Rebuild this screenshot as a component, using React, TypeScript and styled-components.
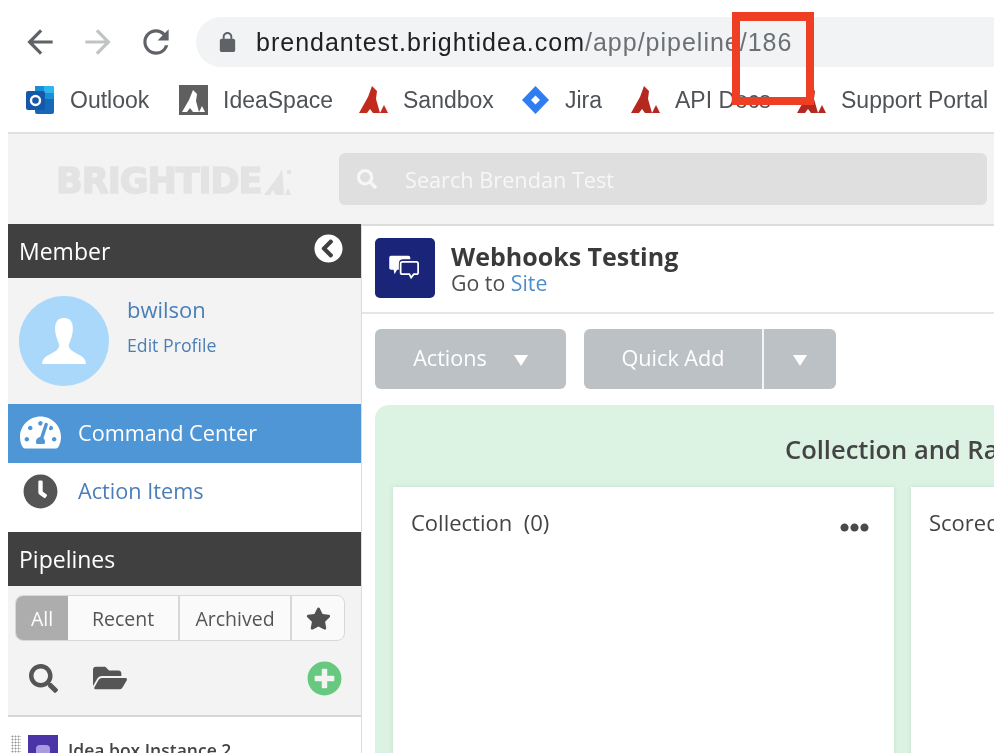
import React from "react";
import styled, { createGlobalStyle } from "styled-components";
import {
  FaChevronCircleLeft,
  FaClock,
  FaEllipsisH,
  FaFolderOpen,
  FaPlusCircle,
  FaSearch,
  FaStar,
  FaTachometerAlt,
} from "react-icons/fa";

const GlobalStyle = createGlobalStyle`
  html, body {
    margin: 0;
    padding: 0;
    background: #fff;
    overflow: hidden;
  }
  * {
    box-sizing: border-box;
  }
`;

const Page = styled.div`
  position: relative;
  width: 994px;
  height: 753px;
  overflow: hidden;
  background: #fff;
  filter: blur(0.5px);
`;

const Chrome = styled.div`
  height: 132px;
  font-family: "Liberation Sans", Arial, sans-serif;
`;

const Toolbar = styled.div`
  display: flex;
  align-items: center;
  height: 84px;
  padding: 17px 0 17px 21px;
`;

const NavButton = styled.svg<{ $dim?: boolean; $flip?: boolean }>`
  width: 38px;
  height: 38px;
  margin-right: 20px;
  fill: ${(p) => (p.$dim ? "#c1c3c5" : "#5f6368")};
  flex: none;
  transform: ${(p) => (p.$flip ? "scaleX(-1)" : "none")};
`;

const UrlPill = styled.div`
  display: flex;
  align-items: center;
  flex: 1;
  height: 50px;
  margin-left: 1px;
  padding-left: 20px;
  border-radius: 25px 0 0 25px;
  background: #f1f3f4;
  font-size: 25px;
  letter-spacing: 1px;
  white-space: nowrap;
`;

const LockIcon = styled.svg`
  width: 23px;
  height: 23px;
  margin-right: 17px;
  fill: #5f6368;
`;

const UrlHost = styled.span`
  color: #202124;
`;

const UrlPath = styled.span`
  color: #6c7074;
`;

const Bookmarks = styled.div`
  display: flex;
  align-items: center;
  height: 32px;
  padding-left: 26px;
  white-space: nowrap;
`;

const Bookmark = styled.div<{ $width: number }>`
  display: flex;
  align-items: center;
  gap: 15px;
  flex: none;
  width: ${(p) => p.$width}px;
  font-size: 23px;
  color: #4f5256;
`;

const BookmarkIcon = styled.svg`
  width: 29px;
  height: 30px;
  flex: none;
`;

const AppShell = styled.div`
  margin-left: 8px;
  font-family: "Open Sans", sans-serif;
`;

const TopBar = styled.div`
  display: flex;
  align-items: center;
  height: 92px;
  padding: 0 7px 0 48px;
  border-top: 2px solid #e0e0e0;
  background: #f3f3f3;
`;

const Logo = styled.div`
  display: flex;
  align-items: center;
  width: 283px;
  padding-top: 4px;
  font-family: "DejaVu Sans", sans-serif;
  font-weight: 700;
  font-size: 35px;
  letter-spacing: -1px;
  color: #e3e3e3;
  -webkit-text-stroke: 1.5px #e3e3e3;
`;

const LogoMark = styled.svg`
  width: 28px;
  height: 27px;
  fill: #e3e3e3;
  margin-left: 2px;
`;

const SearchBar = styled.div`
  display: flex;
  align-items: center;
  gap: 28px;
  flex: 1;
  height: 52px;
  padding-left: 18px;
  border-radius: 6px;
  background: #dfdfdf;
  color: #f7f7f7;
  font-size: 21.7px;
`;

const Columns = styled.div`
  display: flex;
  height: 532px;
`;

const Sidebar = styled.aside`
  flex: none;
  width: 354px;
  border-right: 1px solid #dcdcdc;
`;

const SectionHeader = styled.div`
  display: flex;
  align-items: center;
  justify-content: space-between;
  height: 54px;
  padding: 0 18px 0 11px;
  background: #404040;
  color: #fff;
  font-size: 23px;

  svg {
    margin-bottom: 6px;
  }
`;

const Profile = styled.div`
  display: flex;
  gap: 18px;
  height: 126px;
  padding: 18px 0 0 11px;
  background: #f3f3f3;
`;

const Avatar = styled.div`
  display: flex;
  align-items: flex-end;
  justify-content: center;
  width: 90px;
  height: 90px;
  padding-bottom: 21px;
  border-radius: 50%;
  background: #a9d8fb;
`;

const AvatarIcon = styled.svg`
  width: 44px;
  height: 48px;
  fill: #fff;
`;

const ProfileText = styled.div`
  display: flex;
  flex-direction: column;
  gap: 9px;
  margin-top: -2px;
`;

const UserName = styled.a`
  color: #4b7eb6;
  font-size: 22px;
  line-height: 30px;
`;

const EditLink = styled.a`
  color: #4b7eb6;
  font-size: 17.7px;
  line-height: 24px;
`;

const NavItem = styled.div<{ $active?: boolean; $height: number }>`
  display: flex;
  align-items: ${(p) => (p.$active ? "center" : "flex-start")};
  gap: 17px;
  height: ${(p) => p.$height}px;
  padding: ${(p) => (p.$active ? "0 0 2px 11px" : "9px 0 0 11px")};
  background: ${(p) => (p.$active ? "#4f96d6" : "#fff")};
  color: ${(p) => (p.$active ? "#fff" : "#4b7eb6")};
  font-size: 21.7px;
  line-height: 38px;
`;

const NavIconSlot = styled.span<{ $color: string }>`
  display: flex;
  justify-content: center;
  align-items: center;
  width: 42px;
  height: 38px;
  font-size: 41px;
  color: ${(p) => p.$color};
`;

const FilterArea = styled.div`
  height: 131px;
  padding: 9px 0 0 7px;
  background: #f3f3f3;
  border-bottom: 2px solid #d6d6d6;
`;

const Tabs = styled.div`
  display: flex;
  width: 330px;
  height: 46px;
  border: 1px solid #d8d8d8;
  border-radius: 8px;
  overflow: hidden;
  background: #fafafa;
`;

const Tab = styled.div<{ $active?: boolean; $width: number }>`
  display: flex;
  align-items: center;
  justify-content: center;
  flex: none;
  width: ${(p) => p.$width}px;
  border-right: ${(p) => (p.$active ? "none" : "2px solid #d8d8d8")};
  background: ${(p) => (p.$active ? "#adadad" : "transparent")};
  color: ${(p) => (p.$active ? "#fff" : "#555")};
  font-size: 19.5px;

  &:last-child {
    border-right: none;
    font-size: 25px;
    color: #505050;
  }
`;

const ToolRow = styled.div`
  display: flex;
  align-items: center;
  height: 40px;
  margin-top: 17px;
  padding: 0 3px 0 14px;
  width: 330px;
  color: #555;
  font-size: 29px;
`;

const FolderSlot = styled.span`
  display: flex;
  margin-left: 35px;
  font-size: 34px;
`;

const AddSlot = styled.span`
  display: flex;
  margin-left: auto;
  color: #66c97f;
  font-size: 35px;
`;

const PipelineRow = styled.div`
  display: flex;
  align-items: flex-start;
  gap: 7px;
  padding: 18px 0 0 3px;
  background: #fff;
`;

const DragGrip = styled.div`
  width: 10px;
  height: 18px;
  background-image: radial-gradient(#9a9a9a 0.9px, transparent 1.1px);
  background-size: 3px 3px;
`;

const PipelineThumb = styled.div`
  display: flex;
  align-items: center;
  justify-content: center;
  width: 30px;
  height: 31px;
  background: #4b33a8;
`;

const ThumbGlyph = styled.span`
  width: 14px;
  height: 12px;
  border-radius: 4px;
  background: #a99be0;
`;

const PipelineName = styled.div`
  margin-left: 3px;
  font-size: 17.5px;
  font-weight: 600;
  line-height: 30px;
  color: #444;
`;

const Main = styled.main`
  flex: 1;
  min-width: 0;
  overflow: hidden;
  border-top: 2px solid #dcdcdc;
`;

const TitleRow = styled.div`
  display: flex;
  align-items: center;
  gap: 16px;
  height: 88px;
  padding: 0 0 3px 13px;
  border-bottom: 2px solid #e6e6e6;
`;

const SiteIcon = styled.div`
  display: flex;
  align-items: center;
  justify-content: center;
  width: 60px;
  height: 60px;
  border-radius: 5px;
  background: #1a2478;
`;

const SiteText = styled.div`
  margin-top: 3px;
`;

const SiteTitle = styled.div`
  color: #3a3a3a;
  font-size: 25px;
  font-weight: 700;
  line-height: 28px;
`;

const SiteSub = styled.div`
  color: #4d4d4d;
  font-size: 21.3px;
  line-height: 26px;
`;

const SiteLink = styled.a`
  color: #4f8ec9;
`;

const ActionBar = styled.div`
  display: flex;
  gap: 18px;
  padding: 15px 0 16px 13px;
`;

const GreyButton = styled.div`
  display: flex;
  align-items: stretch;
  height: 60px;
  border-radius: 6px;
  background: #bcc1c5;
  color: #fff;
  font-size: 21.6px;
`;

const ButtonPart = styled.div<{ $width: number; $divided?: boolean }>`
  display: flex;
  align-items: center;
  justify-content: center;
  gap: 27px;
  width: ${(p) => p.$width}px;
  padding-bottom: 3px;
  border-left: ${(p) => (p.$divided ? "2px solid #f4f5f6" : "none")};
`;

const Caret = styled.span`
  width: 0;
  height: 0;
  margin-top: 5px;
  border-left: 7px solid transparent;
  border-right: 7px solid transparent;
  border-top: 11px solid #fff;
`;

const Stage = styled.section`
  width: 700px;
  height: 400px;
  margin-left: 13px;
  padding: 0 18px;
  border-radius: 14px 0 0 0;
  background: #dcf3e3;
`;

const StageTitle = styled.div`
  height: 82px;
  padding: 26px 0 0 392px;
  color: #444;
  font-size: 25.5px;
  font-weight: 600;
  line-height: 36px;
  white-space: nowrap;
`;

const CardRow = styled.div`
  display: flex;
  gap: 17px;
`;

const Card = styled.div`
  display: flex;
  justify-content: space-between;
  flex: none;
  width: 501px;
  height: 300px;
  padding: 20px 25px 0 18px;
  background: #fff;
  box-shadow: 0 0 4px rgba(120, 150, 130, 0.25);
  color: #444;
  font-size: 22px;
  font-weight: 500;
  line-height: 30px;
  white-space: pre;
`;

const CardMenu = styled.span`
  display: flex;
  height: 40px;
  align-items: center;
  font-size: 29px;
  color: #4a4a4a;
`;

const Highlight = styled.div`
  position: absolute;
  left: 732px;
  top: 12px;
  width: 82px;
  height: 93px;
  border-style: solid;
  border-color: #ee3f24;
  border-width: 9px 8px 8px 8px;
`;

const ARROW = "M20 11H7.83l5.59-5.59L12 4l-8 8 8 8 1.41-1.41L7.83 13H20v-2z";

const Peak = ({ color }: { color: string }) => (
  <BookmarkIcon viewBox="0 0 29 30">
    <path fill={color} d="M0 28 L9 12 L13 1 L18 6 L17 14 L21 28 L14 28 L11 24 L8 28 Z" />
    <path fill={color} d="M21 28 L25 20 L29 28 Z" />
  </BookmarkIcon>
);

const App = () => {
  return (
    <Page>
      <GlobalStyle />
      <Chrome>
        <Toolbar>
          <NavButton viewBox="0 0 24 24">
            <path d={ARROW} />
          </NavButton>
          <NavButton viewBox="0 0 24 24" $dim $flip>
            <path d={ARROW} />
          </NavButton>
          <NavButton viewBox="0 0 24 24">
            <path d="M17.65 6.35A7.958 7.958 0 0 0 12 4c-4.42 0-7.99 3.58-7.99 8s3.57 8 7.99 8c3.73 0 6.84-2.55 7.73-6h-2.08A5.99 5.99 0 0 1 12 18c-3.31 0-6-2.69-6-6s2.69-6 6-6c1.66 0 3.14.69 4.22 1.78L13 11h7V4l-2.35 2.35z" />
          </NavButton>
          <UrlPill>
            <LockIcon viewBox="0 0 24 24">
              <path d="M18 8h-1V6c0-2.76-2.24-5-5-5S7 3.24 7 6v2H6c-1.1 0-2 .9-2 2v10c0 1.1.9 2 2 2h12c1.1 0 2-.9 2-2V10c0-1.1-.9-2-2-2zM9 6c0-1.66 1.34-3 3-3s3 1.34 3 3v2H9V6z" />
            </LockIcon>
            <UrlHost>brendantest.brightidea.com</UrlHost>
            <UrlPath>/app/pipeline/186</UrlPath>
          </UrlPill>
        </Toolbar>
        <Bookmarks>
          <Bookmark $width={153}>
            <BookmarkIcon viewBox="0 0 29 30">
              <path fill="#1a8fd8" d="M9 1 H26 Q28 1 28 3 V14 H9 Z" />
              <path fill="#2fb4ee" d="M18 1 H26 Q28 1 28 3 V8 H18 Z" />
              <path fill="#1668b8" d="M9 14 H28 V27 Q28 29 26 29 H11 Q9 29 9 27 Z" />
              <rect x="0" y="6" width="19" height="19" rx="2" fill="#1558a8" />
              <circle cx="9.5" cy="15.5" r="4.5" fill="none" stroke="#fff" strokeWidth="2.4" />
            </BookmarkIcon>
            Outlook
          </Bookmark>
          <Bookmark $width={180}>
            <BookmarkIcon viewBox="0 0 29 30">
              <rect width="29" height="30" fill="#5f5f5f" />
              <path fill="#fff" d="M3 27 L10 15 L14 5 L18 9 L17 16 L20 27 L14 27 L11 23 L8 27 Z" />
              <path fill="#fff" d="M20 27 L23 21 L26 27 Z" />
            </BookmarkIcon>
            IdeaSpace
          </Bookmark>
          <Bookmark $width={162}>
            <Peak color="#c22a1e" />
            Sandbox
          </Bookmark>
          <Bookmark $width={110}>
            <BookmarkIcon viewBox="0 0 29 30">
              <path fill="#2f7df0" d="M14.5 1 L28 15 L14.5 29 L1 15 Z" />
              <path fill="#fff" d="M14.5 10.5 L19 15 L14.5 19.5 L10 15 Z" />
            </BookmarkIcon>
            Jira
          </Bookmark>
          <Bookmark $width={166}>
            <Peak color="#b5281f" />
            API Docs
          </Bookmark>
          <Bookmark $width={197}>
            <Peak color="#b5281f" />
            Support Portal
          </Bookmark>
        </Bookmarks>
      </Chrome>

      <AppShell>
        <TopBar>
          <Logo>
            BRIGHTIDE
            <LogoMark viewBox="0 0 28 27">
              <path d="M0 27 L15 7 L18 1 L19 12 L20 27 L12 27 L9 22 L6 27 Z" />
              <path d="M21 27 L24 20 L27 27 Z" />
              <path d="M23 2 H27 V6 H23 Z" />
            </LogoMark>
          </Logo>
          <SearchBar>
            <FaSearch size={20} />
            Search Brendan Test
          </SearchBar>
        </TopBar>
        <Columns>
          <Sidebar>
            <SectionHeader>
              Member
              <FaChevronCircleLeft size={29} />
            </SectionHeader>
            <Profile>
              <Avatar>
                <AvatarIcon viewBox="0 0 46 48">
                  <path d="M23 0 C32 0 33 8 32 15 C31 21 29 25 28 28 C28 33 32 35 38 38 C43 40 46 44 46 48 H0 C0 44 3 40 8 38 C14 35 18 33 18 28 C17 25 15 21 14 15 C13 8 14 0 23 0 Z" />
                </AvatarIcon>
              </Avatar>
              <ProfileText>
                <UserName>bwilson</UserName>
                <EditLink>Edit Profile</EditLink>
              </ProfileText>
            </Profile>
            <NavItem $active $height={59}>
              <NavIconSlot $color="#fff">
                <FaTachometerAlt />
              </NavIconSlot>
              Command Center
            </NavItem>
            <NavItem $height={69}>
              <NavIconSlot $color="#555">
                <FaClock size={35} />
              </NavIconSlot>
              Action Items
            </NavItem>
            <SectionHeader>Pipelines</SectionHeader>
            <FilterArea>
              <Tabs>
                <Tab $active $width={52}>All</Tab>
                <Tab $width={112}>Recent</Tab>
                <Tab $width={112}>Archived</Tab>
                <Tab $width={52}>
                  <FaStar />
                </Tab>
              </Tabs>
              <ToolRow>
                <FaSearch />
                <FolderSlot>
                  <FaFolderOpen />
                </FolderSlot>
                <AddSlot>
                  <FaPlusCircle />
                </AddSlot>
              </ToolRow>
            </FilterArea>
            <PipelineRow>
              <DragGrip />
              <PipelineThumb>
                <ThumbGlyph />
              </PipelineThumb>
              <PipelineName>Idea box Instance 2</PipelineName>
            </PipelineRow>
          </Sidebar>

          <Main>
            <TitleRow>
              <SiteIcon>
                <svg width="32" height="28" viewBox="0 0 36 32">
                  <path fill="#fff" d="M2 2 H22 Q24 2 24 4 V6 H16 Q11 6 11 11 V18 H9 L6 23 L5 18 H2 Q0 18 0 16 V4 Q0 2 2 2 Z" />
                  <path fill="none" stroke="#fff" strokeWidth="2" d="M15 9 H31 Q33 9 33 11 V21 Q33 23 31 23 H28 L25 27 L23 23 H15 Q13 23 13 21 V11 Q13 9 15 9 Z" />
                </svg>
              </SiteIcon>
              <SiteText>
                <SiteTitle>Webhooks Testing</SiteTitle>
                <SiteSub>
                  Go to <SiteLink>Site</SiteLink>
                </SiteSub>
              </SiteText>
            </TitleRow>
            <ActionBar>
              <GreyButton>
                <ButtonPart $width={191}>
                  Actions
                  <Caret />
                </ButtonPart>
              </GreyButton>
              <GreyButton>
                <ButtonPart $width={178}>Quick Add</ButtonPart>
                <ButtonPart $width={74} $divided>
                  <Caret />
                </ButtonPart>
              </GreyButton>
            </ActionBar>
            <Stage>
              <StageTitle>Collection and Rating</StageTitle>
              <CardRow>
                <Card>
                  <span>Collection  (0)</span>
                  <CardMenu>
                    <FaEllipsisH />
                  </CardMenu>
                </Card>
                <Card>
                  <span>Scored  (0)</span>
                </Card>
              </CardRow>
            </Stage>
          </Main>
        </Columns>
      </AppShell>
      <Highlight />
    </Page>
  );
};

export default App;
